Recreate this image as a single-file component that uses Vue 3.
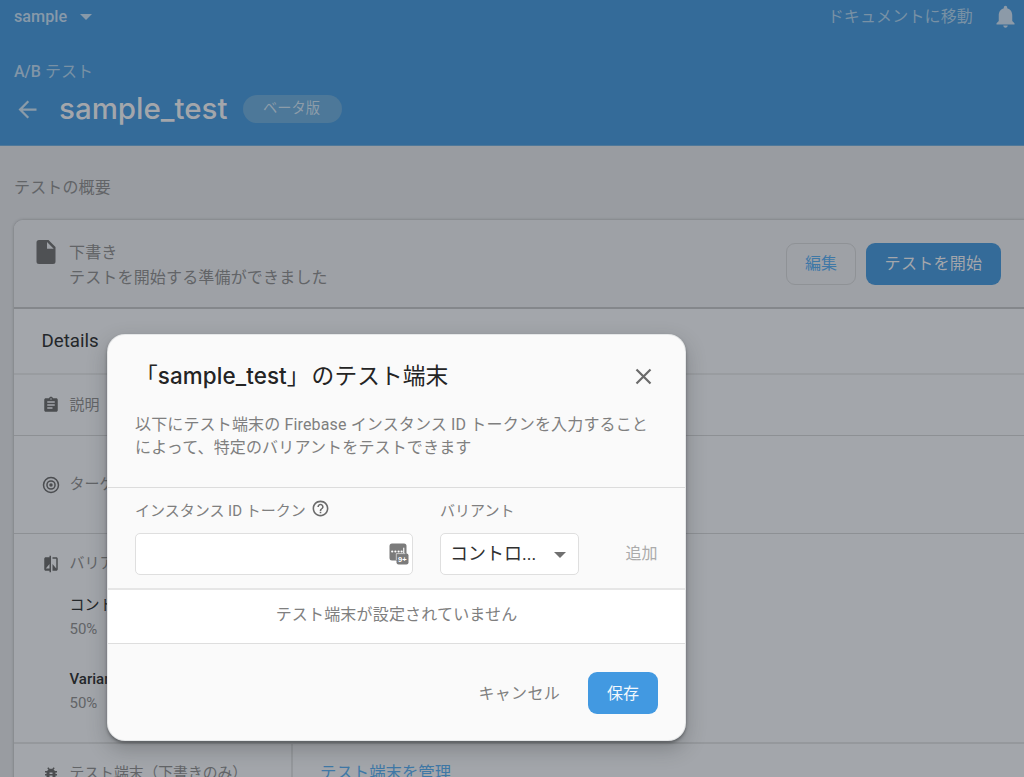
<template>
  <div class="page">
    <header class="header">
      <div class="topbar">
        <button type="button" class="project">
          <span>sample</span>
          <span class="caret"></span>
        </button>
        <div class="topbar-right">
          <a class="docs-link">ドキュメントに移動</a>
          <svg class="bell" viewBox="0 0 24 24">
            <path d="M12 22c1.1 0 2-.9 2-2h-4c0 1.1.9 2 2 2zm6-6v-5c0-3.07-1.63-5.64-4.5-6.32V4c0-.83-.67-1.5-1.5-1.5s-1.5.67-1.5 1.5v.68C7.64 5.36 6 7.92 6 11v5l-2 2v1h16v-1l-2-2z" />
          </svg>
        </div>
      </div>
      <div class="breadcrumb"><b>A/B</b> テスト</div>
      <div class="title-row">
        <svg class="back" viewBox="0 0 24 24">
          <path d="M20 11H7.83l5.59-5.59L12 4l-8 8 8 8 1.41-1.41L7.83 13H20v-2z" />
        </svg>
        <h1>sample_test</h1>
        <span class="beta">ベータ版</span>
      </div>
    </header>

    <main class="content">
      <h2 class="overview">テストの概要</h2>
      <section class="card">
        <div class="card-status">
          <svg class="file-icon" viewBox="0 0 19 24">
            <path fill-rule="evenodd" d="M2.5 0H12l7 7v14.500a2.500 2.500 0 0 1-2.500 2.500h-14A2.500 2.500 0 0 1 0 21.500v-19A2.500 2.500 0 0 1 2.500 0zM10.500 2v6.700h6.700z" />
          </svg>
          <div class="status-text">
            <div>下書き</div>
            <div>テストを開始する準備ができました</div>
          </div>
          <button type="button" class="btn-edit">編集</button>
          <button type="button" class="btn-start">テストを開始</button>
        </div>
        <div class="details-title">Details</div>
        <div v-for="row in rows" :key="row.key" class="row" :class="`row--${row.key}`">
          <svg class="row-icon" viewBox="0 0 24 24">
            <path :d="row.icon" />
          </svg>
          <span>{{ row.label }}</span>
        </div>
        <div class="variants">
          <div class="row row--variants">
            <svg class="row-icon" viewBox="0 0 24 24">
              <path d="M10 3H5c-1.100 0-2 .9-2 2v14c0 1.100.9 2 2 2h5v2h2V1h-2v2zm0 15H5l5-6v6zm9-15h-5v2h5v13l-5-6v9h5c1.100 0 2-.9 2-2V5c0-1.100-.9-2-2-2z" />
            </svg>
            <span>バリアント</span>
          </div>
          <div v-for="variant in variants" :key="variant.name" class="variant">
            <div class="variant-name" :lang="variant.lang">{{ variant.name }}</div>
            <div class="variant-share">{{ variant.share }}</div>
          </div>
        </div>
        <div class="devices">
          <div class="devices-label">
            <svg class="row-icon" viewBox="0 0 24 24">
              <path d="M20 8h-2.810c-.45-.78-1.070-1.450-1.820-1.960L17 4.410 15.590 3l-2.170 2.170C12.960 5.060 12.490 5 12 5s-.96.060-1.410.170L8.410 3 7 4.410l1.620 1.630C7.880 6.550 7.260 7.220 6.810 8H4v2h2.090c-.05.330-.09.660-.09 1v1H4v2h2v1c0 .34.040.67.090 1H4v2h2.810c1.040 1.790 2.970 3 5.190 3s4.150-1.210 5.190-3H20v-2h-2.090c.05-.33.090-.66.090-1v-1h2v-2h-2v-1c0-.34-.04-.67-.09-1H20V8zm-6 8h-4v-2h4v2zm0-4h-4v-2h4v2z" />
            </svg>
            <span>テスト端末（下書きのみ）</span>
          </div>
          <a class="devices-link">テスト端末を管理</a>
        </div>
      </section>
    </main>

    <div class="dialog" role="dialog">
      <div class="dialog-head">
        <div class="dialog-title">
          <h3>「<b>sample_test</b><span class="bracket">」</span>のテスト端末</h3>
          <svg class="close" viewBox="0 0 17 17">
            <path d="M1.500 1.500l14 14M15.500 1.500l-14 14" />
          </svg>
        </div>
        <p>以下にテスト端末の Firebase インスタンス ID トークンを入力すること<br />によって、特定のバリアントをテストできます</p>
      </div>
      <div class="dialog-form">
        <div class="field field--token">
          <label>
            <span>インスタンス ID トークン</span>
            <svg class="help" viewBox="0 0 24 24">
              <path d="M11 18h2v-2h-2v2zm1-16C6.480 2 2 6.480 2 12s4.480 10 10 10 10-4.480 10-10S17.520 2 12 2zm0 18c-4.410 0-8-3.590-8-8s3.590-8 8-8 8 3.590 8 8-3.590 8-8 8zm0-14c-2.210 0-4 1.790-4 4h2c0-1.100.9-2 2-2s2 .9 2 2c0 2-3 1.750-3 5h2c0-2.250 3-2.500 3-5 0-2.210-1.790-4-4-4z" />
            </svg>
          </label>
          <div class="input">
            <svg class="pass-icon" viewBox="0 0 20 22">
              <rect x="0.500" y="0.500" width="17" height="17" rx="2.500" fill="#7b7b7b" />
              <g fill="#fff">
                <circle cx="3.200" cy="8.500" r="1.100" />
                <circle cx="6.400" cy="8.500" r="1.100" />
                <circle cx="9.600" cy="8.500" r="1.100" />
                <circle cx="12.600" cy="8.500" r="1.100" />
                <rect x="14.200" y="4.700" width="1.100" height="5.300" />
              </g>
              <rect x="7.500" y="10.500" width="12" height="11" rx="2" fill="#7b7b7b" />
              <path d="M7.300 17V10.600h9" fill="none" stroke="#fff" stroke-width=".6" />
              <text x="13.400" y="18.700" text-anchor="middle">9+</text>
            </svg>
          </div>
        </div>
        <div class="field field--variant">
          <label>バリアント</label>
          <div class="select">
            <span>コントロ...</span>
            <span class="caret"></span>
          </div>
        </div>
        <button type="button" class="btn-add" disabled>追加</button>
      </div>
      <div class="dialog-empty">テスト端末が設定されていません</div>
      <div class="dialog-actions">
        <button type="button" class="btn-cancel">キャンセル</button>
        <button type="button" class="btn-save">保存</button>
      </div>
    </div>
  </div>
</template>

<script setup>
const rows = [
  {
    key: 'description',
    label: '説明',
    icon: 'M19 3h-4.180C14.400 1.840 13.300 1 12 1s-2.400.84-2.820 2H5c-1.100 0-2 .9-2 2v14c0 1.100.9 2 2 2h14c1.100 0 2-.9 2-2V5c0-1.100-.9-2-2-2zm-7 0c.55 0 1 .45 1 1s-.45 1-1 1-1-.45-1-1 .45-1 1-1zm2 14H7v-2h7v2zm3-4H7v-2h10v2zm0-4H7V7h10v2z'
  },
  {
    key: 'target',
    label: 'ターゲット',
    icon: 'M12 1a11 11 0 1 0 0 22 11 11 0 0 0 0-22zm0 2a9 9 0 1 1 0 18 9 9 0 0 1 0-18zm0 2.600a6.400 6.400 0 1 0 0 12.800 6.400 6.400 0 0 0 0-12.800zm0 2a4.400 4.400 0 1 1 0 8.800 4.400 4.400 0 0 1 0-8.800zM12 9.700a2.300 2.300 0 1 0 0 4.600 2.300 2.300 0 0 0 0-4.600z'
  }
];

const variants = [
  { name: 'コントロール', share: '50%', lang: 'ja' },
  { name: 'Variant A', share: '50%', lang: 'en' }
];
</script>

<style>
body {
  margin: 0;
  overflow: hidden;
}
</style>

<style scoped>
.page {
  position: relative;
  height: 777px;
  overflow: hidden;
  background: #999ca1;
  color: #626467;
  font-family: Roboto, 'Noto Sans CJK JP', sans-serif;
  font-size: 16px;
  font-weight: 400;
}

.page * {
  box-sizing: border-box;
}

svg {
  flex: none;
  fill: currentColor;
}

h1,
h2,
h3,
p {
  margin: 0;
  font-weight: 400;
}

button {
  padding: 0;
  border: none;
  background: none;
  color: inherit;
  font: inherit;
  white-space: nowrap;
}

.caret {
  width: 0;
  height: 0;
  border: 6px solid transparent;
  border-top: 6px solid currentColor;
  border-bottom: 0;
}

/* Header */
.header {
  height: 146px;
  padding: 0 8px 0 14px;
  background: #346b99;
  color: #8b9ba8;
  border-bottom: 1px solid #4f7899;
}

.topbar {
  display: flex;
  align-items: center;
  justify-content: space-between;
  height: 33px;
}

.project {
  display: flex;
  align-items: center;
  gap: 13px;
  font-weight: 500;
  font-size: 16.2px;
  color: #8799a9;
}

.topbar-right {
  display: flex;
  align-items: center;
  gap: 19px;
}

.docs-link {
  padding-bottom: 4px;
  color: #7891a5;
  letter-spacing: 0.15px;
}

.bell {
  width: 27px;
  height: 27px;
  margin-right: -3px;
  color: #8c9aa8;
}

.breadcrumb {
  height: 24px;
  margin-top: 27px;
  line-height: 24px;
  font-size: 16px;
  color: #7891a5;
}

.breadcrumb b {
  color: #8195a7;
  font-weight: 500;
}

.title-row {
  display: flex;
  align-items: center;
  height: 50px;
}

.back {
  width: 27px;
  height: 27px;
}

h1 {
  width: 182px;
  margin-left: 18px;
  padding-bottom: 2px;
  color: #a3a6ab;
  font-family: Inter, sans-serif;
  font-size: 29.5px;
  font-weight: 500;
  line-height: 40px;
}

.beta {
  width: 99px;
  height: 28px;
  margin-left: 2px;
  padding-right: 2px;
  border-radius: 14px;
  background: #4d7899;
  color: #8c9ca9;
  font-size: 14.3px;
  line-height: 26px;
  text-align: center;
}

/* Overview card */
.content {
  padding: 30px 0 0 14px;
}

.overview {
  height: 24px;
  font-size: 16px;
  letter-spacing: 0.15px;
  line-height: 24px;
}

.card {
  width: 1040px;
  height: 620px;
  margin-top: 20px;
  border-radius: 9px;
  background: #a3a6ab;
  box-shadow: 0 0 3px rgba(60, 64, 67, 0.45);
}

.card-status {
  display: flex;
  align-items: center;
  height: 89px;
  padding: 0 53px 0 22px;
  border-bottom: 2px solid #84878b;
  border-radius: 9px 9px 0 0;
  background: #9ea1a6;
}

.file-icon {
  width: 20px;
  height: 24px;
  margin: -24px 13px 0 0;
  color: #4f5154;
}

.status-text {
  flex: 1;
  padding-top: 2px;
  line-height: 25px;
  letter-spacing: 0.17px;
}

.btn-edit,
.btn-start {
  height: 42px;
  padding-bottom: 3px;
  border-radius: 9px;
}

.btn-edit {
  width: 70px;
  border: 1px solid #8f9296;
  color: #3f78a6;
}

.btn-start {
  width: 135px;
  margin-left: 10px;
  background: #346b99;
  color: #a3a6ab;
  letter-spacing: 0.3px;
}

.details-title {
  height: 66px;
  padding-left: 27.5px;
  border-bottom: 2px solid #999ca0;
  color: #24272a;
  font-size: 18.7px;
  line-height: 64px;
}

.row {
  display: flex;
  align-items: center;
  padding-left: 28px;
  font-size: 15px;
}

.row span {
  padding-bottom: 4px;
}

.row--description {
  height: 61px;
  border-bottom: 1px solid #8d9094;
}

.row--target {
  height: 98px;
  border-bottom: 1px solid #8d9094;
}

.row-icon {
  width: 18px;
  height: 18px;
  margin-right: 9.5px;
  color: #4b4d50;
}

.variants {
  height: 210px;
  border-bottom: 2px solid #95989c;
}

.row--variants {
  height: 59px;
}

.variant {
  height: 74px;
  padding-left: 55.5px;
}

.variant-name {
  color: #24272a;
  font-size: 15px;
  font-weight: 500;
  line-height: 24px;
}

.variant-name:lang(ja) {
  font-weight: 400;
}

.variant-share {
  font-size: 15px;
  line-height: 24px;
}

.devices {
  display: flex;
  height: 62px;
}

.devices-label {
  display: flex;
  align-items: center;
  width: 279px;
  padding-left: 28px;
  border-right: 2px solid #95989c;
  font-size: 14.8px;
  white-space: nowrap;
}

.devices-label span {
  padding-bottom: 7px;
}

.devices-label .row-icon {
  margin-top: -2px;
}

.devices-link {
  padding-left: 27px;
  color: #3f78a6;
  font-size: 16.4px;
  line-height: 58px;
}

/* Dialog */
.dialog {
  position: absolute;
  top: 334px;
  left: 107px;
  width: 579px;
  height: 407px;
  border: 1px solid rgba(220, 222, 224, 0.7);
  border-radius: 18px;
  background: #fafafa;
  color: #7f7f7f;
  box-shadow: 0 2px 3px rgba(40, 42, 44, 0.45), 0 8px 20px rgba(40, 42, 44, 0.28);
}

.dialog-head {
  height: 153px;
  padding: 24px 33px 0 27px;
  border-bottom: 1px solid #dcdcdc;
}

.dialog-title {
  display: flex;
  align-items: center;
  justify-content: space-between;
  height: 34px;
}

h3 {
  color: #242424;
  font-size: 22.7px;
  line-height: 34px;
  letter-spacing: 0.1px;
  white-space: nowrap;
}

h3 b {
  font-family: Inter, sans-serif;
  font-size: 22.4px;
  font-weight: 500;
}

.bracket {
  margin-right: 2px;
}

.close {
  width: 17px;
  height: 17px;
  fill: none;
  stroke: #6b6b6b;
  stroke-width: 2.2;
}

.dialog-head p {
  margin-top: 20px;
  letter-spacing: 0.15px;
  line-height: 23px;
  white-space: nowrap;
}

.dialog-form {
  display: flex;
  height: 102px;
  padding: 10px 27px 0 27px;
  border-bottom: 2px solid #e6e6e6;
}

.field--token {
  width: 278px;
}

.field--variant {
  width: 139px;
  margin-left: 27px;
}

.field label {
  display: flex;
  align-items: center;
  height: 26px;
  padding-bottom: 3px;
  font-size: 15px;
}

.help {
  width: 19px;
  height: 19px;
  margin: -2px 0 0 5px;
  color: #6b6b6b;
}

.input,
.select {
  display: flex;
  align-items: center;
  height: 42px;
  margin-top: 9px;
  border: 1px solid #dfdfdf;
  border-radius: 5px;
  background: #ffffff;
}

.input {
  justify-content: flex-end;
  padding-right: 3px;
}

.pass-icon {
  width: 20px;
  height: 22px;
}

.pass-icon text {
  fill: #ffffff;
  font-family: 'Liberation Sans', sans-serif;
  font-size: 7.5px;
  font-weight: 700;
}

.select {
  justify-content: space-between;
  padding: 0 12px 4px 9px;
  color: #303030;
  font-size: 18px;
}

.select .caret {
  margin-top: 5px;
  color: #707070;
}

.btn-add {
  width: 33px;
  height: 42px;
  margin: 33px 0 0 auto;
  color: #ababab;
}

.dialog-empty {
  height: 54px;
  border-bottom: 1px solid #dedede;
  background: #ffffff;
  letter-spacing: 0.18px;
  line-height: 49px;
  text-align: center;
}

.dialog-actions {
  display: flex;
  justify-content: flex-end;
  padding: 28px 27px 0;
}

.btn-cancel {
  margin-right: 28px;
  padding-bottom: 3px;
  letter-spacing: 0.3px;
}

.btn-save {
  width: 70px;
  height: 42px;
  padding-bottom: 3px;
  border-radius: 9px;
  background: #4299e1;
  color: #f2f8fd;
}
</style>
